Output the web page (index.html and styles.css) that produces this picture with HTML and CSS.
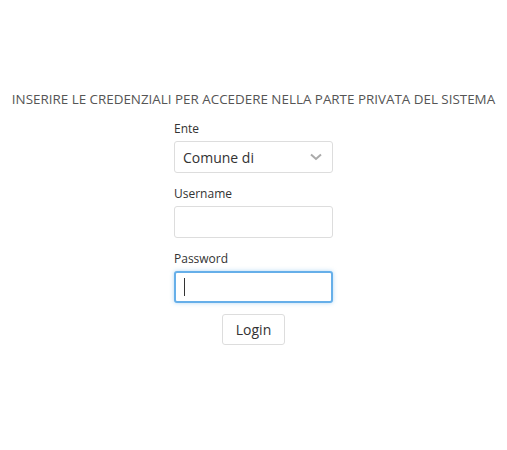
FILE: index.html
```html
<!DOCTYPE html>
<html lang="it">
<head>
<meta charset="utf-8">
<title>Login</title>
<link rel="stylesheet" href="styles.css">
</head>
<body>
<main class="page">
  <h1 class="title">INSERIRE LE CREDENZIALI PER ACCEDERE NELLA PARTE PRIVATA DEL SISTEMA</h1>
  <form class="form">
    <label class="label">Ente</label>
    <div class="select">
      <span class="select-text">Comune di</span>
      <svg class="chevron" width="12" height="8" viewBox="0 0 12 8"><path d="M1 1.5 L6 6 L11 1.5" fill="none" stroke="#aaa" stroke-width="2"/></svg>
    </div>
    <label class="label">Username</label>
    <div class="input"></div>
    <label class="label">Password</label>
    <div class="input focus"><span class="caret"></span></div>
    <div class="actions"><button type="button" class="btn">Login</button></div>
  </form>
</main>
</body>
</html>
```
FILE: styles.css
```css
html, body { margin: 0; padding: 0; background: #fff; }
body { font-family: "Open Sans", "Liberation Sans", sans-serif; color: #333; }
.page { display: flex; flex-direction: column; align-items: center; padding-top: 90px; }
.title { margin: 0; font-size: 13.4px; font-weight: 400; color: #555; line-height: 18px; white-space: nowrap; }
.form { width: 159px; display: flex; flex-direction: column; margin-top: 12px; }
.label { font-size: 12px; line-height: 17px; color: #333; margin-bottom: 4px; }
.select, .input { box-sizing: border-box; height: 32px; border: 1px solid #ddd; border-radius: 3px; margin-bottom: 12px; background: #fff; }
.select { display: flex; align-items: center; justify-content: space-between; padding: 0 10px 0 8px; }
.select-text { font-size: 14px; color: #333; }
.chevron { display: block; }
.input.focus { border-color: #66afe9; border-width: 2px; box-shadow: 0 0 4px rgba(102,175,233,0.5); display: flex; align-items: center; padding-left: 8px; }
.caret { width: 1px; height: 18px; background: #333; }
.actions { display: flex; justify-content: center; margin-top: -1px; }
.btn { font-family: inherit; font-size: 14px; color: #333; background: #fff; border: 1px solid #ddd; border-radius: 3px; height: 31px; padding: 0 13px; }
```
